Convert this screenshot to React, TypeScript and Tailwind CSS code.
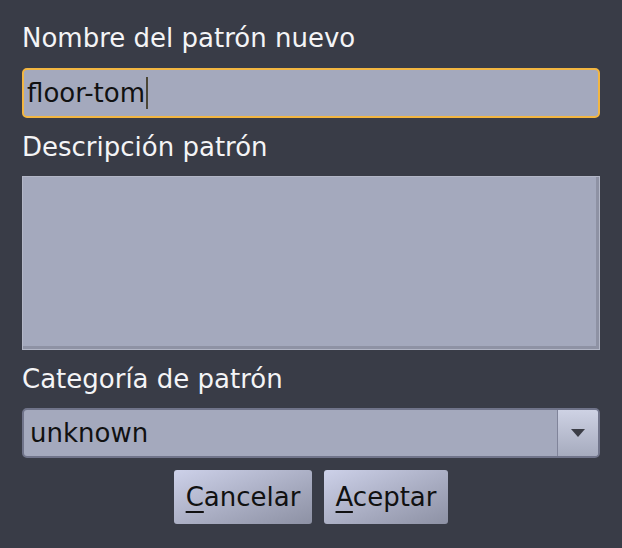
import React from 'react';

const font = { fontFamily: '"DejaVu Sans", "Liberation Sans", sans-serif' };

const App: React.FC = () => {
  return (
    <div
      className="w-[622px] h-[548px] bg-[#393c47] px-[22px] pt-[22px] flex flex-col text-[26px] leading-[32px]"
      style={font}
    >
      <label className="text-[#f4f4f6]">Nombre del patrón nuevo</label>
      <div className="mt-[14px] h-[50px] w-[578px] rounded-[5px] border-2 border-[#f2b642] bg-[#a4a9bd] flex items-center pl-[3px]">
        <span className="text-[#111]">floor-tom</span>
        <span className="ml-[1px] w-[2px] h-[32px] bg-[#4b4636]" />
      </div>

      <label className="mt-[13px] text-[#f4f4f6]">Descripción patrón</label>
      <div className="mt-[13px] h-[174px] w-[578px] border border-[#b3b7c7] bg-[#a4a9bd]">
        <div className="h-full w-full border-r-[3px] border-b-[3px] border-[#8e92a4]" />
      </div>

      <label className="mt-[13px] text-[#f4f4f6]">Categoría de patrón</label>
      <div className="mt-[13px] h-[50px] w-[578px] rounded-[5px] border-2 border-[#70748a] bg-[#a4a9bd] flex overflow-hidden">
        <div className="flex-1 flex items-center pl-[6px] text-[#111]">unknown</div>
        <div className="w-[41px] h-full border-l border-[#80849a] bg-gradient-to-b from-[#ced2e4] to-[#a6abbe] flex items-center justify-center">
          <svg width="14" height="8" viewBox="0 0 14 8">
            <path d="M0 0 H14 L7 8 Z" fill="#3b3d46" />
          </svg>
        </div>
      </div>

      <div className="mt-[12px] flex justify-center gap-[12px]">
        <button
          className="h-[54px] w-[138px] rounded-[3px] bg-gradient-to-br from-[#cdd1e9] to-[#8d91a4] text-[#111] flex items-center justify-center"
          style={font}
        >
          <span>
            <span className="underline underline-offset-[5px] decoration-[2px]">C</span>ancelar
          </span>
        </button>
        <button
          className="h-[54px] w-[124px] rounded-[3px] bg-gradient-to-br from-[#cdd1e9] to-[#8d91a4] text-[#111] flex items-center justify-center"
          style={font}
        >
          <span>
            <span className="underline underline-offset-[5px] decoration-[2px]">A</span>ceptar
          </span>
        </button>
      </div>
    </div>
  );
};

export default App;
